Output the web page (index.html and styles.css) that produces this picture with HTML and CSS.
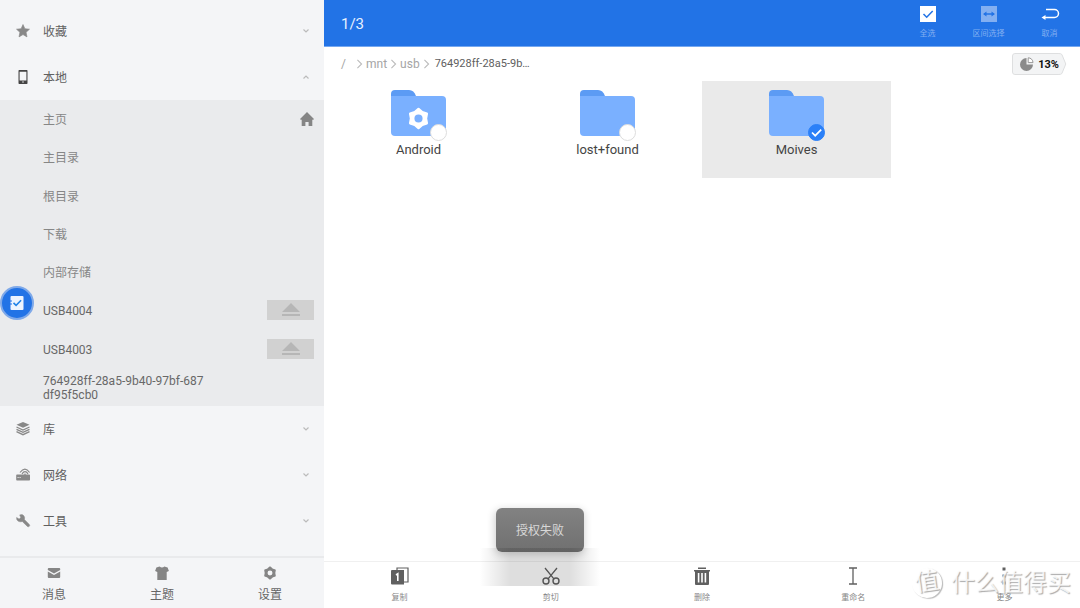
FILE: index.html
```html
<!DOCTYPE html>
<html lang="zh-CN">
<head>
<meta charset="utf-8">
<meta name="viewport" content="width=device-width, initial-scale=1">
<title>文件管理器</title>
<link rel="stylesheet" href="styles.css">
</head>
<body>
<svg class="defs" aria-hidden="true">
  <symbol id="down" viewBox="0 0 8 8"><path d="M1.500 2.500 4 5l2.500-2.500" fill="none" stroke="currentColor" stroke-width="1.200"/></symbol>
  <symbol id="crumb" viewBox="0 0 8 12"><path d="M1.500 1 6.500 6l-5 5" fill="none" stroke="currentColor" stroke-width="1.300"/></symbol>
  <symbol id="eject" viewBox="0 0 18 14"><path d="M9 0l9 9H0zM0 11h18v2H0z" fill="currentColor"/></symbol>
  <symbol id="gear" viewBox="0 0 24 24"><path fill="currentColor" stroke="currentColor" stroke-width="2.500" stroke-linejoin="round" fill-rule="evenodd" d="M12 2l3.900 3.300 4.800 1.700-.9 5 .9 5-4.800 1.700L12 22l-3.900-3.300L3.300 17l.9-5-.9-5 4.800-1.700zM12 6.500a5.500 5.500 0 1 0 0 11 5.500 5.500 0 0 0 0-11z"/></symbol>
  <symbol id="folder" viewBox="0 0 55 46"><path d="M0 14V4q0-4 4-4h14q5 0 7 6v8z" fill="#5c9bf4"/><path d="M0 6h51q4 0 4 4v32q0 4-4 4H4q-4 0-4-4z" fill="#7ab0ff"/></symbol>
</svg>
<div class="app">
  <aside class="sidebar">
    <nav class="nav">
      <button class="group" type="button">
        <svg class="icon" viewBox="0 0 14 14"><path d="M7 .5l1.900 4.200 4.600.5-3.400 3.100.9 4.600-4-2.300-4 2.300.9-4.600L.5 5.200l4.600-.5z" fill="currentColor" stroke="currentColor" stroke-width=".6"/></svg>
        <span>收藏</span><svg class="chevron"><use href="#down"/></svg>
      </button>
      <button class="group open" type="button" aria-expanded="true">
        <svg class="icon" viewBox="0 0 14 14"><path d="M3.200 0h7.600q.7 0 .7.700v12.600q0 .7-.7.700H3.200q-.7 0-.7-.7V.7q0-.7.700-.7zM3.600 1.800v8.600h6.800V1.800zm2.600 9.600v1.200h1.600v-1.200z" fill="currentColor" fill-rule="evenodd"/></svg>
        <span>本地</span><svg class="chevron"><use href="#down"/></svg>
      </button>
      <ul class="places">
        <li><a href="#home">主页</a><svg class="home" viewBox="0 0 14 14"><path d="M7 0l7 7-.7.800h-1V14H8.600v-4H5.400v4H1.700V7.800h-1L0 7z" fill="currentColor"/></svg></li>
        <li><a href="#main">主目录</a></li>
        <li><a href="#root">根目录</a></li>
        <li><a href="#download">下载</a></li>
        <li><a href="#internal">内部存储</a></li>
        <li class="drive"><a href="#usb4004">USB4004</a><button class="eject" type="button" aria-label="弹出 USB4004"><svg><use href="#eject"/></svg></button></li>
        <li class="drive"><a href="#usb4003">USB4003</a><button class="eject" type="button" aria-label="弹出 USB4003"><svg><use href="#eject"/></svg></button></li>
        <li class="drive"><a href="#usb">764928ff-28a5-9b40-97bf-687<wbr>df95f5cb0</a></li>
      </ul>
      <button class="group" type="button">
        <svg class="icon" viewBox="0 0 14 14"><path d="M7 0l6.500 2.800L7 5.800.5 2.800z" fill="currentColor"/><path d="M.5 5L7 8l6.500-3M.5 7.300l6.500 3 6.500-3M.5 9.700l6.500 3 6.500-3" fill="none" stroke="currentColor" stroke-width="1.300"/></svg>
        <span>库</span><svg class="chevron"><use href="#down"/></svg>
      </button>
      <button class="group" type="button">
        <svg class="icon" viewBox="0 0 14 14"><path d="M1 6.500h12.200q.8 0 .8.800v4.400q0 .8-.8.800H1q-.8 0-.8-.8V7.300q0-.8.8-.8zM1.600 9v1.100h1V9zm2 0v1.100h1V9z" fill="currentColor" fill-rule="evenodd"/><path d="M9 7V5.500M4 4.500q5-6.600 9.600 0M6 5.800q3-4.400 6 0" fill="none" stroke="currentColor" stroke-width="1.200"/></svg>
        <span>网络</span><svg class="chevron"><use href="#down"/></svg>
      </button>
      <button class="group" type="button">
        <svg class="icon" viewBox="0 0 14 14"><path d="M.6 3.500l2.500 1.600 1.700-1.500L3.700.9Q6.600 0 8 2q1.100 1.700.4 3.500l4.900 4.900q.9 1 0 1.900t-1.900.1L6.300 7.500Q3.900 8.400 2 7.100.2 5.700.6 3.500z" fill="currentColor" stroke="currentColor" stroke-width=".5"/></svg>
        <span>工具</span><svg class="chevron"><use href="#down"/></svg>
      </button>
    </nav>
    <footer class="side-actions">
      <button type="button"><svg viewBox="0 0 14 14"><path d="M1.800 2h10.400q1 0 1 1v.9L7 7.400.8 3.900V3q0-1 1-1zM.8 5.500L7 9l6.200-3.500V11q0 1-1 1H1.800q-1 0-1-1z" fill="currentColor"/></svg>消息</button>
      <button type="button"><svg viewBox="0 0 14 14"><path d="M4.600.5q2.400 1.800 4.800 0l3.200.9 1.300 3.700-2.200 1V14H2.300V6.100l-2.200-1 1.300-3.700z" fill="currentColor"/></svg>主题</button>
      <button type="button"><svg><use href="#gear"/></svg>设置</button>
    </footer>
    <button class="float" type="button" aria-label="任务"><svg viewBox="0 0 14 16"><path d="M1.500 1h11q1 0 1 1v12q0 1-1 1h-11q-1 0-1-1V2q0-1 1-1z" fill="#edf4ff"/><path d="M3.500 7.800l2.600 2.500 5-5" fill="none" stroke="#2183e8" stroke-width="1.600"/><path d="M0 6h2M0 9h2" stroke="#2273e6"/></svg></button>
  </aside>

  <main class="main">
    <header class="topbar">
      <h1>1/3</h1>
      <div class="tools">
        <button type="button"><svg viewBox="0 0 16 16"><path d="M0 0h16v16H0z" fill="#fff"/><path d="M3.500 8l3.200 3.200 6-6.200" fill="none" stroke="#2273e6" stroke-width="1.500"/></svg>全选</button>
        <button type="button"><svg viewBox="0 0 16 16"><path d="M0 0h16v16H0z" fill="#83aff1"/><path d="M3 8h10" stroke="#2273e6" stroke-width="1.500"/><path d="M2 8l3.500-2.500v5zM14 8l-3.500-2.500v5z" fill="#2273e6"/></svg>区间选择</button>
        <button type="button"><svg viewBox="0 0 16 16"><path d="M4 3.500h8.500a4 4 0 0 1 0 8H2" fill="none" stroke="#fff" stroke-width="1.500"/><path d="M-.5 11.500L3.500 9v5z" fill="#fff"/></svg>取消</button>
      </div>
    </header>
    <div class="pathbar">
      <nav class="crumbs">
        <a class="slash" href="#root">/</a><svg><use href="#crumb"/></svg>
        <a href="#mnt">mnt</a><svg><use href="#crumb"/></svg>
        <a href="#usb-root">usb</a><svg><use href="#crumb"/></svg>
        <a class="current" href="#usb">764928ff-28a5-9b…</a>
      </nav>
      <div class="usage">
        <svg class="tag" viewBox="0 0 56 22" preserveAspectRatio="none"><path d="M3 .5h45q2 0 3 1L55 11l-4 9.500q-1 1-3 1H3q-2.500 0-2.500-2.500V3Q.5.5 3 .5z" fill="#f3f4f5" stroke="#dedfe0"/></svg>
        <svg class="pie" viewBox="0 0 14 14"><path d="M6.500 1v6.500H13A6.500 6.500 0 1 1 6.500 1z" fill="#8b8b8b"/><path d="M8.200.8v4.800H13A4.800 4.800 0 0 0 8.200.8z" fill="#fff" stroke="#999"/></svg>
        <strong>13%</strong>
      </div>
    </div>
    <section class="files">
      <label class="file"><span class="art"><svg class="folder"><use href="#folder"/></svg><svg class="cog"><use href="#gear"/></svg><input type="checkbox"></span>Android</label>
      <label class="file"><span class="art"><svg class="folder"><use href="#folder"/></svg><input type="checkbox"></span>lost+found</label>
      <label class="file selected"><span class="art"><svg class="folder"><use href="#folder"/></svg><input type="checkbox" checked><svg class="tick" viewBox="0 0 17 17"><path d="M4 8.500l3.200 3.200 6-6" fill="none" stroke="#fff" stroke-width="1.700"/></svg></span>Moives</label>
    </section>
    <footer class="actions">
      <button type="button"><svg viewBox="0 0 18 18"><path d="M6 3V1h11v14h-4" fill="none" stroke="currentColor" stroke-width="1.200"/><path d="M1 3h12v14.500H1q-1 0-1-1V4q0-1 1-1z" fill="currentColor"/><path d="M5 8l1.800-1.200V14" fill="none" stroke="#fff" stroke-width="1.600"/></svg>复制</button>
      <button type="button"><svg viewBox="0 0 18 18"><path d="M3 1l9.300 11.300M15 1L5.700 12.300" fill="none" stroke="currentColor" stroke-width="1.300"/><circle cx="4" cy="14" r="3" fill="none" stroke="currentColor" stroke-width="1.400"/><circle cx="14" cy="14" r="3" fill="none" stroke="currentColor" stroke-width="1.400"/></svg>剪切</button>
      <button type="button"><svg viewBox="0 0 18 18"><path d="M5 .5h8V2H5zM1 3h16v1.500h-1V17q0 1-1 1H3q-1 0-1-1V4.500H1zm3.800 3v9.500h1.600V6zm3.400 0v9.500h1.600V6zm3.400 0v9.500h1.600V6z" fill="currentColor" fill-rule="evenodd"/></svg>删除</button>
      <button type="button"><svg viewBox="0 0 18 18"><path d="M5 1h8M5 17h8M9 1v16" stroke="currentColor" stroke-width="1.300"/></svg>重命名</button>
      <button type="button"><svg viewBox="0 0 18 18"><path d="M7.500.5h3v3h-3zM7.500 7.500h3v3h-3zM7.500 14.500h3v3h-3z" fill="currentColor"/></svg>更多</button>
    </footer>
  </main>
  <div class="toast" role="status">授权失败</div>
  <div class="watermark"><span class="seal">值</span>什么值得买</div>
</div>
</body>
</html>
```
FILE: styles.css
```css
* { box-sizing: border-box; }
body {
  margin: 0;
  font: 12px/14px Roboto, "Noto Sans CJK SC", sans-serif;
  color: #666;
  background: #fff;
}
button { border: 0; padding: 0; background: none; font: inherit; color: inherit; }
a { color: inherit; text-decoration: none; }
svg { display: block; flex: none; overflow: visible; }
.defs { position: absolute; width: 0; height: 0; }
.app { position: relative; display: flex; min-height: 100vh; }

.sidebar {
  position: relative;
  display: flex;
  flex-direction: column;
  width: 30%;
  background: #f4f5f7;
}
.nav { flex: 1; display: flex; flex-direction: column; padding: 8px 0 12px; }
.group {
  display: flex;
  align-items: center;
  gap: 13px;
  height: 46px;
  padding: 0 14px 0 16px;
  text-align: left;
}
.group span { flex: 1; padding-top: 2px; color: #606060; }
.icon { width: 14px; height: 14px; color: #888; }
.open .icon { color: #444; }
.chevron { width: 8px; height: 8px; color: #bbb; }
.open .chevron { transform: rotate(180deg); }
.places {
  flex: 1;
  display: grid;
  grid-auto-rows: 1fr;
  margin: 0;
  padding: 0 10px 0 43px;
  list-style: none;
  background: #eaebed;
  color: #868686;
}
.places li { display: flex; align-items: center; justify-content: space-between; min-height: 38px; }
.places a { max-width: 170px; padding-top: 2px; }
.drive { color: #686868; }
.home { width: 14px; height: 14px; color: #858585; }
.eject {
  display: grid;
  place-items: center;
  width: 47px;
  height: 20px;
  background: #d1d1d1;
  color: #b6b6b6;
}
.eject svg { width: 18px; height: 14px; }
.side-actions {
  display: grid;
  grid-template-columns: repeat(3, 1fr);
  height: 52px;
  border-top: 2px solid #e9eaec;
}
.side-actions button {
  display: flex;
  flex-direction: column;
  align-items: center;
  gap: 8px;
  padding-top: 8px;
}
.side-actions svg { width: 14px; height: 14px; color: #858585; }
.float {
  position: absolute;
  left: 0;
  top: 286px;
  display: grid;
  place-items: center;
  width: 34px;
  height: 34px;
  border: 2px solid #7fa9e9;
  border-radius: 50%;
  background: #2273e6;
}
.float svg { width: 14px; height: 16px; }

.main { flex: 1; display: flex; flex-direction: column; min-width: 0; }
.topbar {
  display: flex;
  align-items: center;
  justify-content: space-between;
  height: 47px;
  padding-left: 17px;
  border-bottom: 1px solid #75a8f0;
  background: #2273e6;
  color: #e8f1ff;
}
.topbar h1 { margin: 0; padding-top: 2px; font-size: 15px; font-weight: 400; }
.tools { display: flex; }
.tools button {
  display: flex;
  flex-direction: column;
  align-items: center;
  gap: 6px;
  width: 61px;
  font-size: 8px;
  line-height: 12px;
  color: #83aff1;
}
.tools svg { width: 16px; height: 16px; }
.pathbar { display: flex; align-items: center; justify-content: space-between; height: 34px; padding: 0 13px 0 17px; }
.crumbs { display: flex; align-items: center; gap: 3px; color: #a5a5a5; }
.crumbs svg { width: 7px; height: 10px; color: #bbb; }
.slash { width: 12px; }
.current { padding-left: 2px; font-size: 11px; color: #606060; }
.usage {
  position: relative;
  display: flex;
  align-items: center;
  gap: 4px;
  height: 22px;
  padding: 0 8px;
  color: #111;
  font-size: 11px;
}
.tag { position: absolute; inset: 0; width: 100%; height: 100%; }
.pie, .usage strong { position: relative; }
.usage strong { padding-top: 2px; }
.pie { width: 14px; height: 14px; }
.files { flex: 1; display: grid; grid-template-columns: repeat(4, 1fr); align-content: start; }
.file {
  display: flex;
  flex-direction: column;
  align-items: center;
  gap: 7px;
  height: 97px;
  padding-top: 9px;
  font-size: 13px;
  color: #444;
}
.selected { background: #eaeaea; }
.art { position: relative; }
.folder { width: 55px; height: 46px; }
.cog { position: absolute; left: 16px; top: 17px; width: 23px; height: 23px; color: #fff; }
.art input {
  position: absolute;
  right: -1px;
  bottom: -5px;
  width: 17px;
  height: 17px;
  margin: 0;
  appearance: none;
  border: 1px solid #ddd;
  border-radius: 50%;
  background: #fff;
}
.art input:checked { border-color: #2b80f8; background: #2b80f8; }
.tick { position: absolute; right: -1px; bottom: -5px; width: 17px; height: 17px; pointer-events: none; }
.actions {
  display: grid;
  grid-template-columns: repeat(5, 1fr);
  height: 47px;
  border-top: 1px solid #f0f0f0;
}
.actions button {
  display: flex;
  flex-direction: column;
  align-items: center;
  gap: 7px;
  padding-top: 5px;
  font-size: 8px;
  line-height: 12px;
  color: #888;
}
.actions svg { width: 18px; height: 18px; color: #606060; }

.toast {
  position: absolute;
  left: 50%;
  bottom: 56px;
  transform: translateX(-50%);
  padding: 16px 20px 14px;
  border-radius: 6px;
  background: linear-gradient(#828282, #707070);
  box-shadow: 0 2px 8px rgba(0, 0, 0, .2);
  color: #d8d8d8;
}
.toast::after {
  content: "";
  position: absolute;
  z-index: -1;
  left: -16px;
  right: -16px;
  top: 90%;
  height: 38px;
  background: linear-gradient(90deg, transparent, rgba(0, 0, 0, .13) 25%, rgba(0, 0, 0, .13) 75%, transparent);
}
.watermark {
  position: absolute;
  right: 9px;
  bottom: 9px;
  display: flex;
  align-items: center;
  gap: 9px;
  font-size: 24px;
  line-height: 32px;
  color: rgba(255, 255, 255, .8);
  text-shadow: 1px 1px 1px #aaa;
  pointer-events: none;
}
.seal {
  width: 30px;
  height: 30px;
  border-radius: 50%;
  box-shadow: 1px 1px 1px #bbb;
  line-height: 28px;
  text-align: center;
  transform: rotate(-8deg);
}
```
